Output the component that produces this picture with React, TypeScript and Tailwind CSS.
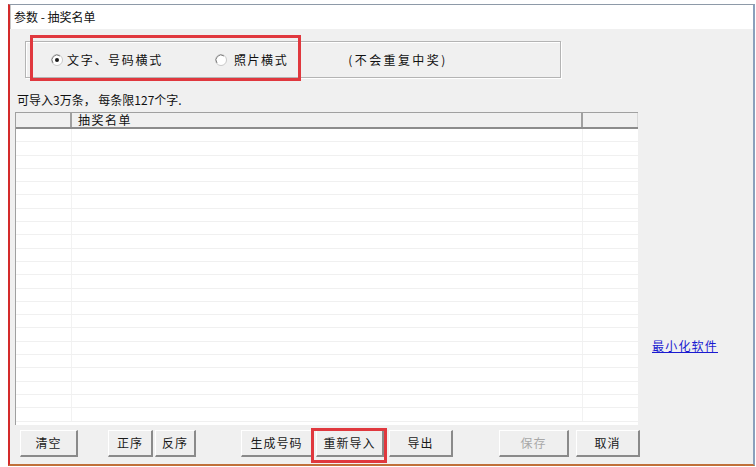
import React from 'react';

const font = { fontFamily: '"Noto Sans CJK SC", "Liberation Sans", sans-serif' };

function Radio({ checked }: { checked?: boolean }) {
  return (
    <svg width="12" height="12" viewBox="0 0 12 12" className="shrink-0">
      <circle cx="6" cy="6" r="5.5" fill="#ffffff" stroke="#c8c8c8" />
      <path d="M2 9 A5 5 0 0 1 9 2" fill="none" stroke="#808080" strokeWidth="1" />
      {checked && <circle cx="6" cy="6" r="2" fill="#1a1a1a" />}
    </svg>
  );
}

function Btn({ label, w, disabled, className = '' }: { label: string; w: number; disabled?: boolean; className?: string }) {
  return (
    <button
      className={`h-[27px] shrink-0 border-t border-l border-t-white border-l-white border-r-2 border-b-2 border-r-[#8a8a8a] border-b-[#8a8a8a] bg-[#efefef] text-[12px] tracking-[1px] ${disabled ? 'text-[#a8a8a8]' : 'text-[#1a1a1a]'} ${className}`}
      style={{ width: w }}
    >
      {label}
    </button>
  );
}

export default function App() {
  const rows = Array.from({ length: 22 });
  return (
    <div className="w-[756px] h-[467px] bg-white pt-[4px] pl-[8px]" style={font}>
      <div className="w-[747px] h-[462px] flex flex-col border-l-2 border-l-[#d42a2a] border-t border-t-[#8e9aa8] border-r-2 border-r-[#8aa0bc] border-b-2 border-b-[#c0703a]">
        <div className="h-[24px] bg-white flex items-center pl-[3px] text-[12px] text-[#111] border-l border-l-[#c8c8c8]">
          参数 - 抽奖名单
        </div>
        <div className="flex-1 bg-[#f0f0f0] relative pl-[5px] flex flex-col">
          {/* group box */}
          <div className="ml-[10px] mt-[12px] w-[536px] h-[37px] border border-[#b4b4b4] shadow-[inset_1px_1px_0_#ffffff,1px_1px_0_#ffffff] flex items-center text-[12px] text-[#111]">
            <div className="flex items-center ml-[25px] gap-[4px]">
              <Radio checked />
              <span className="tracking-[1.7px]">文字、号码横式</span>
            </div>
            <div className="flex items-center ml-[52px] gap-[7px]">
              <Radio />
              <span className="tracking-[1.6px]">照片横式</span>
            </div>
            <span className="ml-[60px] tracking-[2.4px]">(不会重复中奖)</span>
          </div>

          <div className="ml-[2px] mt-[14px] text-[12px] leading-[16px] text-[#111]">可导入3万条， 每条限127个字.</div>

          <div className="flex items-end mt-[4px]">
            <div className="w-[623px] h-[313px] bg-white border-l border-t border-[#a0a0a0] flex flex-col overflow-hidden">
              <div className="h-[16px] shrink-0 flex bg-[#f0f0f0] border-b-2 border-b-[#8c8c8c] text-[12px] leading-[14px] text-[#111]">
                <div className="w-[56px] border-r-2 border-r-[#a0a0a0]" />
                <div className="w-[511px] border-r-2 border-r-[#a0a0a0] pl-[6px] tracking-[1.5px]">抽奖名单</div>
                <div className="flex-1 border-r border-r-[#d8d8d8]" />
              </div>
              {rows.map((_, i) => (
                <div key={i} className="h-[13.3px] shrink-0 flex border-b border-b-[#f0f0f0]">
                  <div className="w-[56px] border-r border-r-[#f2f2f2]" />
                  <div className="w-[511px] border-r border-r-[#f2f2f2]" />
                  <div className="flex-1" />
                </div>
              ))}
            </div>
            <a href="#" className="ml-[14px] mb-[70px] text-[12px] text-[#1a1ad0] underline tracking-[1.2px]">最小化软件</a>
          </div>

          <div className="flex items-start mt-[5px] ml-[5px]">
            <Btn label="清空" w={58} />
            <Btn label="正序" w={45} className="ml-[30px]" />
            <Btn label="反序" w={41} className="ml-[2px]" />
            <Btn label="生成号码" w={72} className="ml-[45px]" />
            <Btn label="重新导入" w={68} className="ml-[3px]" />
            <Btn label="导出" w={64} className="ml-[5px]" />
            <Btn label="保存" w={70} disabled className="ml-[46px]" />
            <Btn label="取消" w={64} className="ml-[7px]" />
          </div>

          {/* red highlight annotations */}
          <div className="absolute left-[20px] top-[6px] w-[271px] h-[46px] border-[3px] border-[#e0383e]" />
          <div className="absolute left-[301px] top-[399px] w-[76px] h-[35px] border-[3px] border-[#e0383e]" />
        </div>
      </div>
    </div>
  );
}
